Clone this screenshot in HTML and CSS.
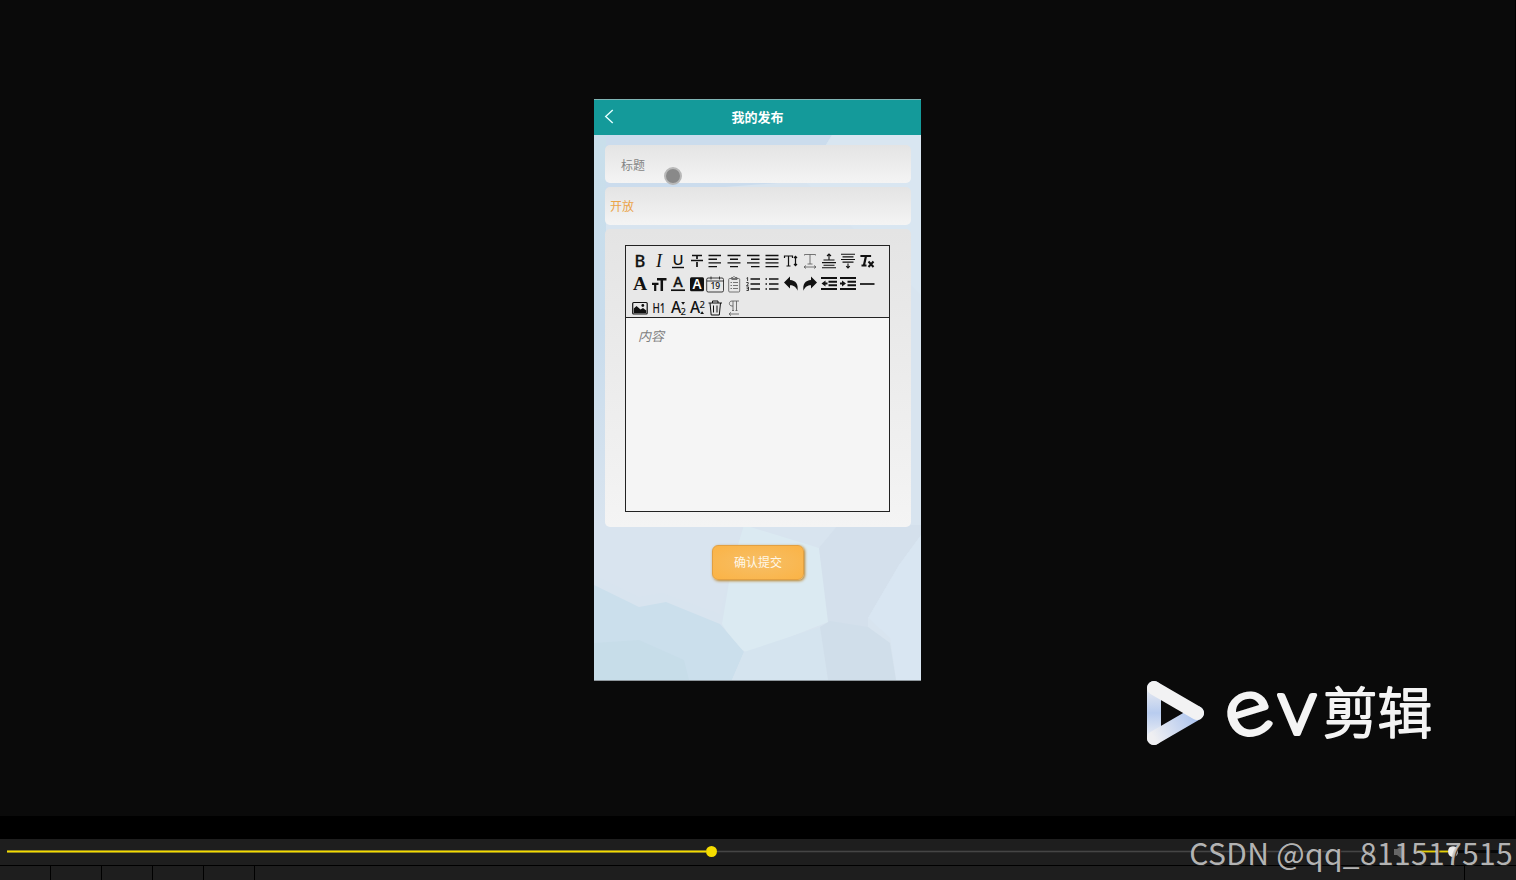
FILE: index.html
```
<!DOCTYPE html>
<html lang="zh-CN">
<head>
    <meta charset="UTF-8">
    <meta name="viewport" content="width=device-width, initial-scale=1.0">
    <title>我的发布</title>
    <link rel="stylesheet" href="styles.css">
</head>
<body>
    <div class="player">
        <div class="stage">
            <div class="phone">
                <!-- 多边形背景 -->
                <svg class="phone-bg" viewBox="0 0 327 545" preserveAspectRatio="none">
                    <defs>
                        <linearGradient id="side" x1="0" y1="0" x2="0" y2="1">
                            <stop offset="0" stop-color="#c9dfeb"/>
                            <stop offset=".5" stop-color="#c9dcec"/>
                            <stop offset="1" stop-color="#d9e4ef"/>
                        </linearGradient>
                    </defs>
                    <rect width="327" height="545" fill="#d8e4ef"/>
                    <path d="M0 0H238L210 46L0 62Z" fill="#cbdced"/>
                    <path d="M0 0H12V390H0Z" fill="url(#side)"/>
                    <path d="M238 0H327V160L210 46Z" fill="#d9e6f1"/>
                    <path d="M0 390H150L138 430L126 479L68 458L45 462L0 440Z" fill="#d9e4ef"/>
                    <path d="M150 390L225 413L234 476L234 487L155 518L143 513L128 489L138 430Z" fill="#dbeaf2"/>
                    <path d="M225 413L244 390H327V400L305 430L274 483V495L234 487Z" fill="#d4e0ec"/>
                    <path d="M327 400L305 430L274 483L296 503L302 545H327Z" fill="#d9e6f2"/>
                    <path d="M0 450L45 472L72 467L126 489L150 517L138 545H0Z" fill="#cbdfec"/>
                    <path d="M0 508L45 505L90 525L95 545H0Z" fill="#c7dde9"/>
                    <path d="M150 517L226 492L234 545H138Z" fill="#d5e4ef"/>
                    <path d="M226 492L236 486L274 492L296 508L302 545H234Z" fill="#d0deea"/>
                </svg>
                <div class="nav-bar">
                    <svg class="back" viewBox="0 0 10 16"><path d="M9 1L1.5 8L9 15"/></svg>
                    <span class="nav-title">我的发布</span>
                </div>
                <div class="form">
                    <div class="field field-title">标题</div>
                    <div class="field field-open">开放</div>
                    <div class="editor-card">
                        <div class="editor">
                            <div class="toolbar">
                                <svg viewBox="0 0 18 18"><text class="m" x="9" y="14.5" font-size="16.5">B</text></svg>
                                <svg viewBox="0 0 18 18"><text class="serif i" x="9" y="14.8" font-size="18">I</text></svg>
                                <svg viewBox="0 0 18 18"><text x="9" y="12.7" font-size="15">U</text><path d="M3 15.5H15"/></svg>
                                <svg viewBox="0 0 18 18"><path d="M4 3.5H14M9 3.5V7M9 10V15M3 8.5H15" stroke-width="1.7"/></svg>
                                <svg viewBox="0 0 18 18"><path d="M2.5 3.5H15M2.5 7.2H11M2.5 10.9H15M2.5 14.6H11"/></svg>
                                <svg viewBox="0 0 18 18"><path d="M2.5 3.5H15.5M5 7.2H13M2.5 10.9H15.5M5 14.6H13"/></svg>
                                <svg viewBox="0 0 18 18"><path d="M3 3.5H15.5M7 7.2H15.5M3 10.9H15.5M7 14.6H15.5"/></svg>
                                <svg viewBox="0 0 18 18"><path d="M2.5 3.5H15.5M2.5 7.2H15.5M2.5 10.9H15.5M2.5 14.6H15.5"/></svg>
                                <svg viewBox="0 0 18 18"><path d="M2.5 6V4H10.5V6M6.5 4V14M4.5 14H8.5" stroke-width="1.2"/><path d="M13.5 5V13M12 6L13.5 4.3L15 6M12 12L13.5 13.7L15 12" stroke-width="1.2"/></svg>
                                <svg viewBox="0 0 18 18" class="thin"><path d="M3.5 3.5V2.5H14.5V3.5M9 2.5V12M6.5 12H11.5M3 15H15M5 13.5L3 15L5 16.5M13 13.5L15 15L13 16.5"/></svg>
                                <svg viewBox="0 0 18 18"><path d="M3.5 8H14.5M2 10.6H16M3.5 13.2H14.5M2 15.8H16M9 8V2M7 4L9 2L11 4" stroke-width="1.1"/></svg>
                                <svg viewBox="0 0 18 18"><path d="M2 2.3H16M3.5 4.9H14.5M2 7.5H16M3.5 10.1H14.5M9 11.5V16M7.2 14.2L9 16L10.8 14.2" stroke-width="1.1"/></svg>
                                <svg viewBox="0 0 18 18"><path d="M3.5 5V4H12V5M8 4L6 13M3.5 13.5H8.5" stroke-width="2.2"/><path d="M10.5 9.5L15.5 15M15.5 9.5L10.5 15" stroke-width="2"/></svg>

                                <svg viewBox="0 0 18 18"><text class="serif b" x="9" y="15" font-size="19.5">A</text></svg>
                                <svg viewBox="0 0 18 18"><path d="M7 4.3H16.5M11.8 4V16" stroke-width="2.5"/><path d="M2 8.8H8.5M5.2 9V16" stroke-width="2.2"/></svg>
                                <svg viewBox="0 0 18 18"><text class="m" x="9" y="12" font-size="14.5">A</text><path d="M2 15.2H16" stroke-width="1.7"/></svg>
                                <svg viewBox="0 0 18 18"><rect x="2" y="2.3" width="14" height="14" rx="1.5" class="solid"/><text class="white b" x="9" y="13.9" font-size="13.5">A</text></svg>
                                <svg viewBox="0 0 18 18"><rect x=".7" y="3" width="16.8" height="14" rx="1.5" stroke-width=".8"/><path d="M1 6H17.5M5 1.5V4.5M13.5 1.5V4.5" stroke-width=".8"/><text x="9.3" y="14" font-size="8.5">19</text></svg>
                                <svg viewBox="0 0 18 18" class="thin"><rect x="3.7" y="3.5" width="11" height="13.5" rx="1"/><path d="M6.5 3.5V2.5H8L9 1.3L10 2.5H12V4.5H6.5M5.5 7.5H7M8 7.5H13M5.5 10.5H7M8 10.5H13M5.5 13.5H7M8 13.5H13"/></svg>
                                <svg viewBox="0 0 18 18"><path d="M6.5 4H16M6.5 9H16M6.5 14H16" stroke-width="1.3"/><path d="M2.5 3.3L3.6 2.5V6M2.3 7.5H4.2V9L2.5 10.7H4.5M2.5 12H4.5V15.5H2.5M2.7 13.7H4.5" stroke-width=".8"/></svg>
                                <svg viewBox="0 0 18 18"><path d="M6 4H15.5M6 9H15.5M6 14H15.5" stroke-width="1.3"/><path d="M2.5 4H4M2.5 9H4M2.5 14H4" stroke-width="1.5"/></svg>
                                <svg viewBox="0 0 18 18"><path class="solid" d="M8 1.5V5C13.8 5.5 16.5 9 15.5 15.8C14 11.8 11.5 10.3 8 10.3V13.5L2 7.4Z"/></svg>
                                <svg viewBox="0 0 18 18"><path class="solid" d="M10 1.5V5C4.2 5.5 1.5 9 2.5 15.8C4 11.8 6.5 10.3 10 10.3V13.5L16 7.4Z"/></svg>
                                <svg viewBox="0 0 18 18"><path d="M1 3H17M8.5 6.7H17M8.5 10.3H17M1 14H17" stroke-width="2.1"/><path class="solid" d="M5.5 5.5V11.5L1.5 8.5ZM5.5 7.5H7.5V9.5H5.5Z"/></svg>
                                <svg viewBox="0 0 18 18"><path d="M1 3H17M8.5 6.7H17M8.5 10.3H17M1 14H17" stroke-width="2.1"/><path class="solid" d="M3 5.5V11.5L7 8.5ZM1 7.5H3V9.5H1Z"/></svg>
                                <svg viewBox="0 0 18 18"><path d="M2 9H16.5" stroke-width="1.7"/></svg>

                                <svg viewBox="0 0 18 18"><rect x="1.7" y="3.5" width="14.5" height="11.5" rx="1" stroke-width="1.2"/><path class="solid" d="M2.8 14.2V9.5L5.5 7L9.5 10.5L12 9L15.2 11.5V14.2Z"/><circle class="solid" cx="11.8" cy="6.5" r="1.4"/></svg>
                                <svg viewBox="0 0 18 18"><text x="9" y="13.5" font-size="13.5" textLength="13" lengthAdjust="spacingAndGlyphs">H1</text></svg>
                                <svg viewBox="0 0 18 18"><text x="7" y="14" font-size="15.5">A</text><text x="14.2" y="16" font-size="9.5">2</text><path class="solid" d="M12.2 3H16L14.1 5.8Z"/></svg>
                                <svg viewBox="0 0 18 18"><text x="7" y="14" font-size="15.5">A</text><text x="14.2" y="8.5" font-size="9.5">2</text><path class="solid" d="M12.2 15H16L14.1 12.2Z"/></svg>
                                <svg viewBox="0 0 18 18"><path d="M2.5 4H16M6.5 4V2H12V4M4 4L5.2 16H13.3L14.5 4M7.5 6.5V13.5M11 6.5V13.5" stroke-width="1"/></svg>
                                <svg viewBox="0 0 18 18" class="thin"><path d="M14 2H7C3.5 2 3.5 7 7 7H8M8 2V11.5M11.5 2V11.5M7 11.5H9M10.5 11.5H12.5M4 15H14M6 13.3L4 15L6 16.7"/></svg>
                            </div>
                            <div class="content">内容</div>
                        </div>
                    </div>
                    <div class="submit">确认提交</div>
                </div>
                <div class="touch"></div>
            </div>

            <div class="logo">
                <svg class="logo-mark" viewBox="0 0 60 66">
                    <defs>
                        <linearGradient id="g1" x1="0" y1="0" x2="0" y2="1">
                            <stop offset="0" stop-color="#e8eaf0"/>
                            <stop offset=".5" stop-color="#b8ccef"/>
                            <stop offset="1" stop-color="#eceef4"/>
                        </linearGradient>
                        <linearGradient id="g2" gradientUnits="userSpaceOnUse" x1="8" y1="58" x2="50" y2="33">
                            <stop offset="0" stop-color="#efeff2"/>
                            <stop offset="1" stop-color="#a9c2ee"/>
                        </linearGradient>
                    </defs>
                    <path d="M8 8V58" stroke="url(#g2)"/>
                    <rect x="1" y="8" width="14" height="50" fill="url(#g1)"/>
                    <path d="M8 58L51 33" stroke="url(#g2)"/>
                    <path d="M8 8L51 33" stroke="#f2f2f3"/>
                </svg>
                <svg class="logo-text" viewBox="0 0 220 66">
                    <text class="latin" transform="translate(27.5 33.5) rotate(-17) scale(1.12 1)" x="0" y="21" font-size="80">e</text>
                    <text class="latin" x="76" y="53.5" font-size="78">v</text>
                    <text class="cn" x="102" y="53" font-size="54.5">剪辑</text>
                </svg>
            </div>
        </div>

        <div class="gap"></div>

        <div class="controls">
            <div class="progress">
                <div class="played"></div>
                <div class="knob"></div>
                <div class="rest"></div>
            </div>
            <svg class="speaker" viewBox="0 0 14 14"><path d="M0 4H3L8 0V14L3 10H0Z"/><path d="M10 4V10" class="wave"/></svg>
            <div class="volume"><div class="level"></div><div class="volume-knob"></div><div class="volume-rest"></div></div>
        </div>

        <div class="tabs">
            <span></span><span></span><span></span><span></span><span></span>
            <span class="wide"></span>
        </div>

        <div class="watermark">CSDN @qq_811517515</div>
    </div>
</body>
</html>
```
FILE: styles.css
```
* {
    box-sizing: border-box;
}

body {
    margin: 0;
    background: #000;
    font-family: "Liberation Sans", "Noto Sans CJK SC", sans-serif;
}

.player {
    position: relative;
    display: flex;
    flex-direction: column;
    width: 1516px;
    height: 880px;
    overflow: hidden;
}

.stage {
    position: relative;
    height: 816px;
    padding: 99px 0 0 594px;
    background: #0a0a0a;
    border-right: 1px solid #000;
}

/* 手机页面 */
.phone {
    position: relative;
    width: 327px;
    height: 582px;
    background: #d8e4ef;
    border-bottom: 1px solid #8f979d;
}

.phone-bg {
    position: absolute;
    left: 0;
    top: 36px;
    width: 327px;
    height: 545px;
}

.nav-bar {
    position: relative;
    display: flex;
    align-items: center;
    justify-content: center;
    height: 36px;
    border-top: 1px solid #7fb5b5;
    background: #149a9a;
    color: #fff;
}

.back {
    position: absolute;
    left: 10px;
    top: 9px;
    width: 10px;
    height: 15px;
    fill: none;
    stroke: #e5ffff;
    stroke-width: 1.5;
}

.nav-title {
    font-size: 13px;
    font-weight: bold;
    line-height: 18px;
}

.form {
    position: relative;
    display: flex;
    flex-direction: column;
    align-items: center;
    padding: 10px 10px 0 11px;
    gap: 4px;
}

.field,
.editor-card {
    width: 306px;
    border-radius: 5px;
    background: linear-gradient(#e4e4e4, #f4f4f4);
}

.field {
    height: 38px;
    line-height: 40px;
    font-size: 12px;
}

.field-title {
    padding-left: 16px;
    line-height: 42px;
    color: #858585;
}

.field-open {
    padding-left: 5px;
    color: #eba448;
}

.editor-card {
    height: 298px;
    padding: 16px 20px 15px 20px;
}

.editor {
    width: 265px;
    height: 267px;
    border: 1px solid #222;
    background: #f5f5f5;
}

.toolbar {
    display: grid;
    grid-template-columns: repeat(13, 18.95px);
    grid-auto-rows: 23.6px;
    align-items: center;
    height: 72px;
    padding: 3px 0 0 4.7px;
    border-bottom: 1px solid #222;
    background: #e8e8e8;
}

.toolbar svg {
    width: 18px;
    height: 18px;
    overflow: visible;
    fill: none;
    stroke: #111;
    stroke-width: 1.4;
}

.toolbar .thin {
    stroke: #555;
    stroke-width: .8;
}

.toolbar .solid {
    fill: #111;
    stroke: none;
}

.toolbar text {
    fill: #111;
    stroke: none;
    text-anchor: middle;
    font-family: "Noto Sans", sans-serif;
    font-weight: 500;
}

.toolbar .serif {
    font-family: "Liberation Serif", serif;
}

.toolbar .m {
    font-weight: 500;
    stroke: #111;
    stroke-width: .3;
}

.toolbar .b {
    font-weight: 600;
}

.toolbar .i {
    font-style: italic;
}

.toolbar .white {
    fill: #fff;
}

.content {
    padding: 10px 12px;
    color: #808080;
    font-size: 13px;
    font-style: italic;
    line-height: 18px;
}

.submit {
    width: 92px;
    height: 35px;
    margin-top: 14px;
    border: 1px solid #e2a042;
    border-radius: 6px;
    background: radial-gradient(#f6bf67, #fbb345);
    box-shadow: 1px 1px 3px #b98124;
    color: #fff8e8;
    font-size: 12px;
    line-height: 35px;
    text-align: center;
}

.touch {
    position: absolute;
    left: 70px;
    top: 68px;
    width: 18px;
    height: 18px;
    border: 2px solid #b8b8b8;
    border-radius: 50%;
    background: #898989;
}

/* 右下角 logo */
.logo {
    position: absolute;
    left: 1146px;
    top: 680px;
    display: flex;
    align-items: center;
    height: 66px;
}

.logo-mark {
    width: 60px;
    height: 66px;
    margin-right: 15px;
    fill: none;
    stroke-width: 14;
    stroke-linecap: round;
}

.logo-text {
    width: 220px;
    height: 66px;
    overflow: visible;
    fill: #f4f4f4;
    stroke: #f4f4f4;
    stroke-linejoin: round;
}

.logo-text .latin {
    font-family: Lato, sans-serif;
    font-weight: 300;
    text-anchor: middle;
    stroke-width: 4.2px;
}

.logo-text .cn {
    font-family: "Noto Sans CJK SC", sans-serif;
    font-weight: 300;
    stroke-width: 2.2px;
}

/* 播放控制 */
.gap {
    height: 23px;
    background: #000;
}

.controls {
    display: flex;
    align-items: center;
    height: 26px;
    padding: 0 0 1px 7px;
    background: #1e1e1e;
}

.progress {
    display: flex;
    align-items: center;
    width: 1369px;
}

.played {
    width: 699px;
    height: 3px;
    background: #f5dc00;
    border: solid #92871a;
    border-width: 1px 0;
}

.knob {
    width: 11px;
    height: 11px;
    border-radius: 50%;
    background: #f5dc00;
}

.rest {
    flex: 1;
    height: 3px;
    background: #454545;
    border: solid #292929;
    border-width: 1px 0;
}

.speaker {
    width: 14px;
    height: 14px;
    margin-left: 18px;
    fill: #666;
}

.wave {
    stroke: #555;
}

.volume {
    display: flex;
    align-items: center;
    margin-left: 6px;
}

.level {
    width: 34px;
    height: 3px;
    background: #e4ce05;
    border: solid #756d18;
    border-width: 1px 0;
}

.volume-knob {
    width: 10px;
    height: 11px;
    border-radius: 50%;
    background: #eee;
}

.volume-rest {
    width: 42px;
    height: 3px;
    background: #080808;
}

.tabs {
    display: flex;
    height: 15px;
    border-top: 1px solid #000;
    background: #1e1e1e;
}

.tabs span {
    width: 51px;
    border-right: 1px solid #000;
}

.tabs .wide {
    width: 1210px;
}

.watermark {
    position: absolute;
    right: 3px;
    top: 834px;
    color: rgba(200, 200, 200, .9);
    font-family: "Noto Sans CJK SC", sans-serif;
    font-size: 30px;
    font-weight: 400;
    letter-spacing: .35px;
    line-height: 36px;
    text-shadow: 1px 1px 1px #222;
    white-space: nowrap;
}
```
